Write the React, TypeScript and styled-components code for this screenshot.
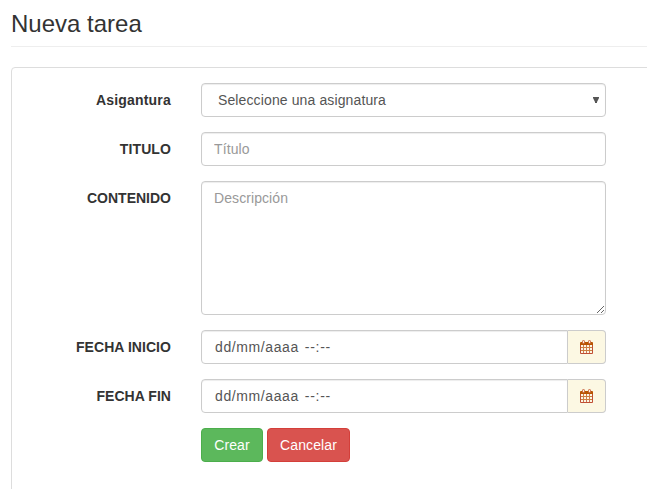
import React from "react";
import styled, { createGlobalStyle, css } from "styled-components";

const GlobalStyle = createGlobalStyle`
  *, *::before, *::after { box-sizing: border-box; }
  html, body { margin: 0; overflow: hidden; background: #fff; }
  body {
    font-family: "Liberation Sans", Arial, sans-serif;
    font-size: 14px;
    line-height: 20px;
    color: #333;
  }
`;

const Page = styled.main`
  height: 489px;
  padding: 10px 0 0 11px;
  overflow: hidden;
`;

const Title = styled.h1`
  margin: 0 0 20px;
  height: 37px;
  border-bottom: 1px solid #eee;
  font-size: 24px;
  font-weight: 400;
  line-height: 27px;
`;

const Panel = styled.form`
  width: 700px;
  height: 460px;
  padding: 15px;
  border: 1px solid #ddd;
  border-radius: 4px;
`;

const Row = styled.div`
  display: grid;
  grid-template-columns: 144px 405px;
  column-gap: 30px;
  margin-bottom: 15px;
`;

const Label = styled.label<{ $tracking?: number }>`
  padding-top: 7px;
  font-weight: 700;
  text-align: right;
  letter-spacing: ${(p) => p.$tracking ?? 0}px;
`;

const control = css`
  display: block;
  width: 100%;
  height: 34px;
  margin: 0;
  padding: 6px 12px;
  border: 1px solid #ccc;
  border-radius: 4px;
  background: #fff;
  box-shadow: inset 0 1px 1px rgba(0, 0, 0, 0.075);
  font: inherit;
  color: #555;
  outline: 0;
  &::placeholder { color: #999; opacity: 1; }
`;

const TextInput = styled.input`
  ${control}
  letter-spacing: 0.12px;
`;

const TextArea = styled.textarea`
  ${control}
  height: 134px;
  resize: vertical;
  letter-spacing: 0.08px;
`;

const SelectBox = styled.div`
  ${control}
  display: flex;
  align-items: center;
  justify-content: space-between;
  padding: 6px 6px 6px 16px;
  letter-spacing: 0.12px;
`;

const Group = styled.div`
  display: flex;
`;

const DateField = styled.div`
  ${control}
  flex: 1;
  border-radius: 4px 0 0 4px;
  padding-left: 13px;
  white-space: pre;
`;

const DatePart = styled.span`
  letter-spacing: 0.6px;
`;

const TimePart = styled.span`
  margin-left: 1.5px;
  letter-spacing: 0.7px;
`;

const Addon = styled.span`
  display: flex;
  align-items: center;
  justify-content: center;
  width: 38px;
  height: 34px;
  padding-right: 1px;
  border: 1px solid #ccc;
  border-left: 0;
  border-radius: 0 4px 4px 0;
  background: #fcf8e3;
`;

const Actions = styled.div`
  display: flex;
  gap: 4px;
  margin-left: 174px;
`;

const Button = styled.button<{ $tone: "success" | "danger" }>`
  height: 34px;
  width: ${(p) => (p.$tone === "success" ? 62 : 83)}px;
  padding: 0;
  border: 1px solid ${(p) => (p.$tone === "success" ? "#4cae4c" : "#d43f3a")};
  border-radius: 4px;
  background: ${(p) => (p.$tone === "success" ? "#5cb85c" : "#d9534f")};
  color: #fff;
  font: inherit;
  letter-spacing: 0.12px;
`;

const CalendarIcon = () => (
  <svg width="13" height="14" viewBox="0 0 13 14" aria-hidden="true">
    <path d="M3.5 5v8M6.5 5v8M9.5 5v8" stroke="#cf7458" fill="none" />
    <path d="M1 7.5h11M1 10.5h11" stroke="#cc8140" fill="none" />
    <path d="M.5 3v10.5h12V3" stroke="#c04f35" fill="none" strokeLinejoin="round" />
    <path d="M1 2h11a1 1 0 0 1 1 1v2H0V3a1 1 0 0 1 1-1z" fill="#b85400" />
    <rect x="2.5" y="0.5" width="2" height="3" rx="0.8" fill="#fdf0dc" stroke="#c9623f" />
    <rect x="8.5" y="0.5" width="2" height="3" rx="0.8" fill="#fdf0dc" stroke="#c9623f" />
  </svg>
);

const DateRow = ({ label }: { label: string }) => (
  <Row>
    <Label $tracking={0.05}>{label}</Label>
    <Group>
      <DateField>
        <DatePart>dd/mm/aaaa </DatePart>
        <TimePart>--:--</TimePart>
      </DateField>
      <Addon><CalendarIcon /></Addon>
    </Group>
  </Row>
);

export default function App() {
  return (
    <>
      <GlobalStyle />
      <Page>
        <Title>Nueva tarea</Title>
        <Panel>
          <Row>
            <Label $tracking={0.2}>Asigantura</Label>
            <SelectBox role="combobox">
              Seleccione una asignatura
              <svg width="6" height="6" viewBox="0 0 6 6" aria-hidden="true">
                <path d="M0 0h6v1L4 5v1H2V5L0 1z" fill="#555" />
              </svg>
            </SelectBox>
          </Row>
          <Row>
            <Label $tracking={0.1}>TITULO</Label>
            <TextInput placeholder="Título" />
          </Row>
          <Row>
            <Label>CONTENIDO</Label>
            <TextArea placeholder="Descripción" />
          </Row>
          <DateRow label="FECHA INICIO" />
          <DateRow label="FECHA FIN" />
          <Actions>
            <Button type="button" $tone="success">Crear</Button>
            <Button type="button" $tone="danger">Cancelar</Button>
          </Actions>
        </Panel>
      </Page>
    </>
  );
}
